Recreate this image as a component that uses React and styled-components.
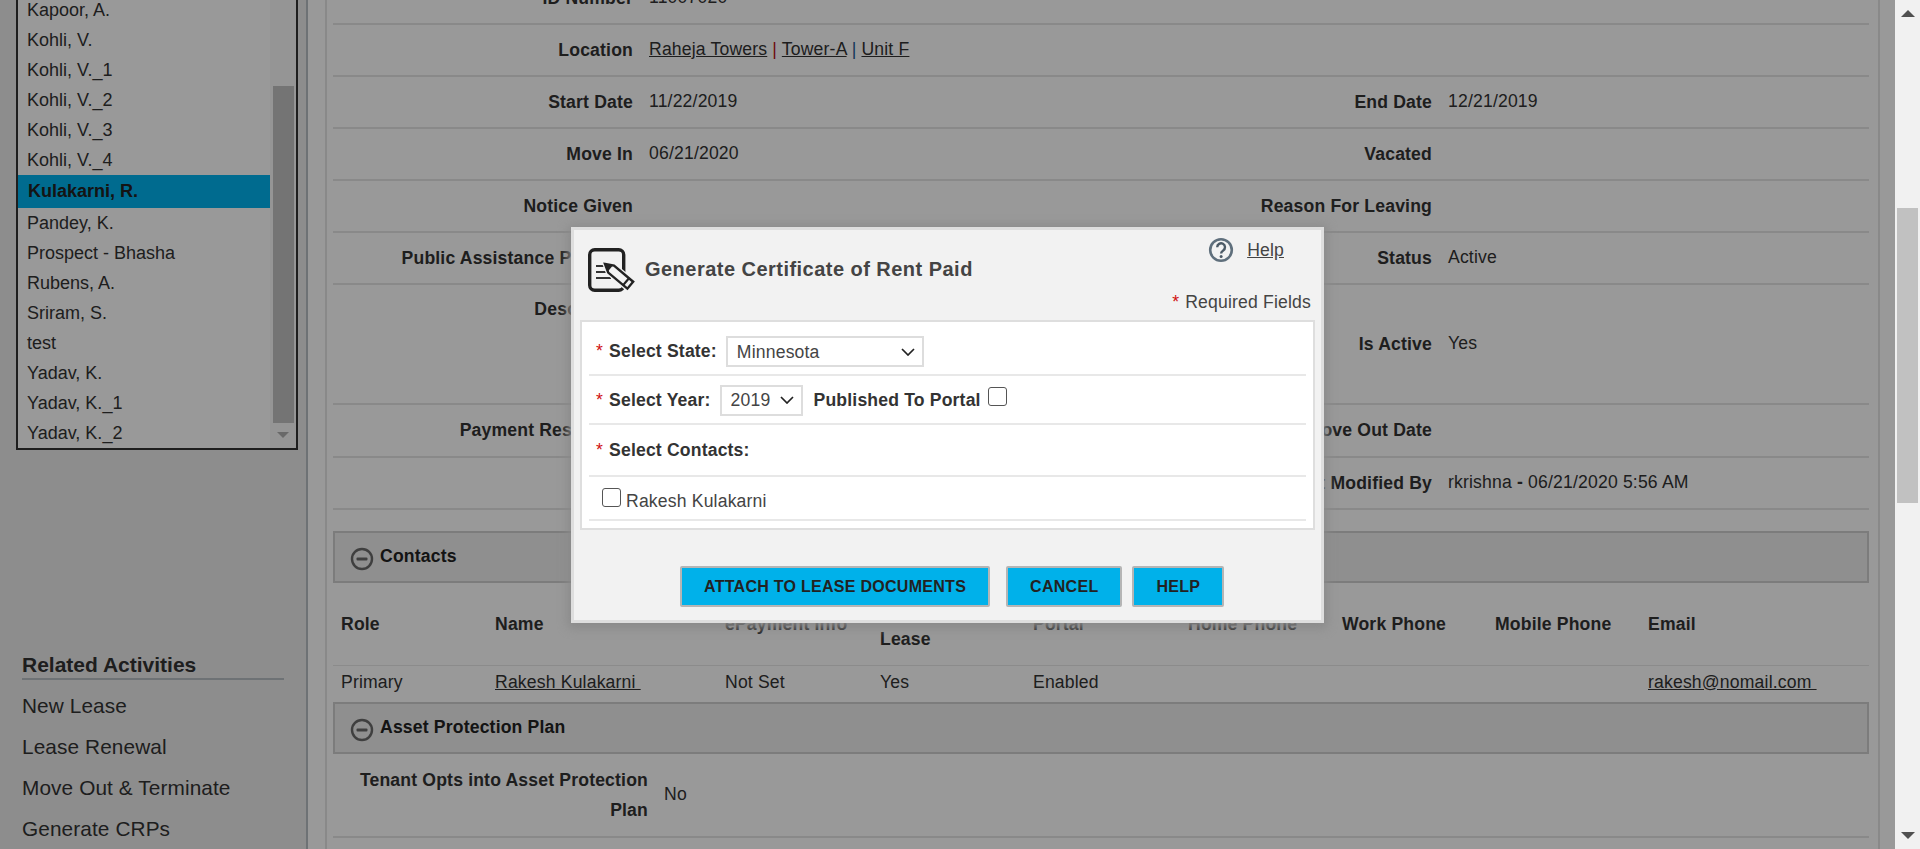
import React from "react";
import styled, { createGlobalStyle } from "styled-components";

const chevron =
  "data:image/svg+xml,%3Csvg xmlns='http://www.w3.org/2000/svg' width='14' height='8' viewBox='0 0 14 8'%3E%3Cpath d='M1 1l6 6 6-6' fill='none' stroke='%23222' stroke-width='1.7'/%3E%3C/svg%3E";

const tenants = [
  "Kapoor, A.",
  "Kohli, V.",
  "Kohli, V._1",
  "Kohli, V._2",
  "Kohli, V._3",
  "Kohli, V._4",
  "Kulakarni, R.",
  "Pandey, K.",
  "Prospect - Bhasha",
  "Rubens, A.",
  "Sriram, S.",
  "test",
  "Yadav, K.",
  "Yadav, K._1",
  "Yadav, K._2",
];

const activities = [
  "New Lease",
  "Lease Renewal",
  "Move Out & Terminate",
  "Generate CRPs",
];

const columns = [
  "Role",
  "Name",
  "ePayment Info",
  "On Lease",
  "Portal",
  "Home Phone",
  "Work Phone",
  "Mobile Phone",
  "Email",
];

const App = () => {
  const rows = [
    { label: "ID Number", value: "11007020" },
    {
      label: "Location",
      value: (
        <>
          <LinkText>Raheja Towers</LinkText> <RedPipe>|</RedPipe>{" "}
          <LinkText>Tower-A</LinkText> <BluePipe>|</BluePipe>{" "}
          <LinkText>Unit F</LinkText>
        </>
      ),
    },
    {
      label: "Start Date",
      value: "11/22/2019",
      rightLabel: "End Date",
      rightValue: "12/21/2019",
    },
    { label: "Move In", value: "06/21/2020", rightLabel: "Vacated" },
    { label: "Notice Given", rightLabel: "Reason For Leaving" },
    {
      label: "Public Assistance Program",
      rightLabel: "Status",
      rightValue: "Active",
    },
    { label: "Description", rightLabel: "Is Active", rightValue: "Yes", tall: true },
    {
      label: "Payment Restriction",
      rightLabel: "Move Out Date",
      height: 53,
    },
    {
      rightLabel: "Last Modified By",
      rightValue: (
        <>
          rkrishna <b>-</b> 06/21/2020 5:56 AM
        </>
      ),
    },
  ];

  return (
    <Frame>
      <GlobalStyle />
      <Page>
        <Shell>
          <Sidebar>
            <ListBox>
              <TenantList>
                {tenants.map((name) =>
                  name === "Kulakarni, R." ? (
                    <SelectedTenant key={name}>{name}</SelectedTenant>
                  ) : (
                    <Tenant key={name}>{name}</Tenant>
                  )
                )}
              </TenantList>
              <ListScroll>
                <ListThumb />
                <ListArrow />
              </ListScroll>
            </ListBox>
            <RelatedTitle>Related Activities</RelatedTitle>
            {activities.map((item) => (
              <Activity key={item}>{item}</Activity>
            ))}
          </Sidebar>
          <Main>
            {rows.map((row) => (
              <DetailRow
                key={row.rightLabel || row.label}
                $height={row.tall ? 120 : row.height || 52}
              >
                <DetailLabel $top={row.tall}>{row.label}</DetailLabel>
                <DetailValue>{row.value}</DetailValue>
                <DetailLabel>{row.rightLabel}</DetailLabel>
                <DetailValue>{row.rightValue}</DetailValue>
              </DetailRow>
            ))}
            <SectionBar $first>
              <MinusIcon />
              Contacts
            </SectionBar>
            <TableHead>
              {columns.map((col) => (
                <HeadCell key={col}>
                  {col === "On Lease" ? (
                    <>
                      On
                      <br />
                      Lease
                    </>
                  ) : (
                    col
                  )}
                </HeadCell>
              ))}
            </TableHead>
            <TableRow>
              <BodyCell>Primary</BodyCell>
              <BodyCell>
                <LinkText>Rakesh Kulakarni&nbsp;</LinkText>
              </BodyCell>
              <BodyCell>Not Set</BodyCell>
              <BodyCell>Yes</BodyCell>
              <BodyCell>Enabled</BodyCell>
              <BodyCell />
              <BodyCell />
              <BodyCell />
              <BodyCell>
                <LinkText>rakesh@nomail.com&nbsp;</LinkText>
              </BodyCell>
            </TableRow>
            <SectionBar>
              <MinusIcon />
              Asset Protection Plan
            </SectionBar>
            <PlanRow>
              <PlanLabel>Tenant Opts into Asset Protection Plan</PlanLabel>
              <DetailValue>No</DetailValue>
            </PlanRow>
          </Main>
        </Shell>
        <Overlay />
        <Modal>
          <ModalHeader>
            <DocIcon />
            <ModalTitle>Generate Certificate of Rent Paid</ModalTitle>
            <HelpLink>
              <HelpIcon />
              <LinkText>Help</LinkText>
            </HelpLink>
          </ModalHeader>
          <RequiredNote>
            <NoteStar>*</NoteStar> Required Fields
          </RequiredNote>
          <Panel>
            <FormRow $height={54} $pad={7}>
              <FieldLabel>
                <Star>*</Star>Select State:
              </FieldLabel>
              <Dropdown $width={198} defaultValue="Minnesota">
                <option>Minnesota</option>
                <option>Wisconsin</option>
              </Dropdown>
            </FormRow>
            <FormRow $height={49} $pad={1}>
              <FieldLabel>
                <Star>*</Star>Select Year:
              </FieldLabel>
              <Dropdown $width={83} defaultValue="2019">
                <option>2019</option>
                <option>2020</option>
              </Dropdown>
              <PublishLabel>Published To Portal</PublishLabel>
              <Check $raise />
            </FormRow>
            <FormRow $height={52}>
              <FieldLabel>
                <Star>*</Star>Select Contacts:
              </FieldLabel>
            </FormRow>
            <FormRow $height={44} $pad={6}>
              <ContactLabel>
                <Check />
                Rakesh Kulakarni
              </ContactLabel>
            </FormRow>
          </Panel>
          <ButtonRow>
            <ActionButton>Attach to Lease Documents</ActionButton>
            <ActionButton $gap={16}>Cancel</ActionButton>
            <ActionButton $gap={10}>Help</ActionButton>
          </ButtonRow>
        </Modal>
      </Page>
      <PageScroll>
        <ScrollUp />
        <PageThumb />
        <ScrollDown />
      </PageScroll>
    </Frame>
  );
};

export default App;

const MinusIcon = () => (
  <MinusSvg viewBox="0 0 24 24">
    <circle cx="12" cy="12" r="10" fill="none" stroke="#6a6a6a" strokeWidth="2.4" />
    <rect x="6.5" y="10.5" width="11" height="3" rx="1" fill="#6a6a6a" />
  </MinusSvg>
);

const HelpIcon = () => (
  <HelpSvg viewBox="0 0 26 26">
    <circle cx="13" cy="13" r="10.8" fill="none" stroke="#5f6f7c" strokeWidth="2.6" />
    <path
      d="M9.2 10.2a3.9 3.9 0 1 1 6 3.3c-1.4.9-2.1 1.6-2.1 3.1"
      fill="none"
      stroke="#4c5a66"
      strokeWidth="2.4"
    />
    <circle cx="13.1" cy="19.4" r="1.5" fill="#4c5a66" />
  </HelpSvg>
);

const DocIcon = () => (
  <DocSvg viewBox="0 0 48 46">
    <rect x="2.7" y="2.7" width="34" height="40.6" rx="5" fill="none" stroke="#222" strokeWidth="3.4" />
    <path d="M9 19h18M9 25h15M9 31h15" stroke="#333" strokeWidth="2.2" />
    <g transform="translate(18 17) rotate(40)">
      <path d="M0 0l8 -4.5h25v9h-25z" fill="#f2f2f2" stroke="#f2f2f2" strokeWidth="5" />
      <path d="M0 0l8 -4.5h25v9h-25z" fill="#f2f2f2" stroke="#222" strokeWidth="2.4" />
      <path d="M0 0l7 -3.5v7z" fill="#222" />
      <path d="M27.5 -4.5v9" stroke="#222" strokeWidth="2.2" />
    </g>
  </DocSvg>
);

const GlobalStyle = createGlobalStyle`
  html, body {
    margin: 0;
    height: 100%;
    overflow: hidden;
    background: #fff;
  }
  * {
    box-sizing: border-box;
  }
  body {
    font-family: "Liberation Sans", Arial, sans-serif;
    font-size: 17.6px;
    letter-spacing: 0.17px;
    color: #333;
  }
`;

const Frame = styled.div`
  display: flex;
  height: 100vh;
  overflow: hidden;
`;

const Page = styled.div`
  position: relative;
  flex: 1;
  overflow: hidden;
`;

const Shell = styled.div`
  display: flex;
  min-height: calc(100vh + 27px);
  margin-top: -27px;
`;

const Sidebar = styled.aside`
  width: 308px;
  flex: none;
  background: #ececec;
  border-right: 2px solid #b8bfc4;
`;

const ListBox = styled.div`
  display: flex;
  width: 282px;
  margin-left: 16px;
  border: 2px solid #333;
  border-top: 0;
  background: #fff;
`;

const TenantList = styled.ul`
  width: 252px;
  margin: 0;
  padding: 22px 0 0;
  list-style: none;
  font-size: 18px;
  letter-spacing: 0;
`;

const Tenant = styled.li`
  height: 30px;
  padding-left: 9px;
  line-height: 30px;
`;

const SelectedTenant = styled.li`
  height: 33px;
  padding-left: 10px;
  line-height: 33px;
  font-weight: bold;
  background: #00b2ee;
  color: #222;
`;

const ListScroll = styled.div`
  display: flex;
  flex-direction: column;
  align-items: center;
  width: 26px;
  padding-top: 113px;
  background: #f8f8f8;
`;

const ListThumb = styled.div`
  width: 21px;
  height: 337px;
  background: #c1c1c1;
`;

const ListArrow = styled.div`
  margin-top: 9px;
  border-left: 6px solid transparent;
  border-right: 6px solid transparent;
  border-top: 6px solid #b0b0b0;
`;

const RelatedTitle = styled.h3`
  width: 262px;
  margin: 202px 0 5px 22px;
  border-bottom: 2px solid #b8bfc4;
  font-size: 21px;
  line-height: 26px;
  letter-spacing: 0;
  color: #333;
`;

const Activity = styled.div`
  margin-left: 22px;
  font-size: 20.8px;
  line-height: 41px;
  letter-spacing: 0.1px;
`;

const Main = styled.main`
  width: 1555px;
  flex: none;
  margin-left: 17px;
  padding: 0 9px 0 6px;
  border-left: 2px solid #e4e4e4;
  border-right: 2px solid #e4e4e4;
`;

const DetailRow = styled.div`
  display: grid;
  grid-template-columns: 300px 500px 299px 1fr;
  align-items: center;
  height: ${(p) => p.$height}px;
  border-bottom: 2px solid #e4e4e4;
`;

const DetailLabel = styled.div`
  align-self: ${(p) => (p.$top ? "start" : "center")};
  margin-top: ${(p) => (p.$top ? "14px" : "0")};
  text-align: right;
  font-weight: bold;
`;

const DetailValue = styled.div`
  padding: 0 0 2px 16px;
`;

const LinkText = styled.span`
  text-decoration: underline;
`;

const RedPipe = styled.span`
  color: #b81515;
`;

const BluePipe = styled.span`
  color: #1d5a94;
`;

const SectionBar = styled.div`
  display: flex;
  align-items: center;
  height: 52px;
  margin-top: ${(p) => (p.$first ? "21px" : "0")};
  padding: 0 0 2px 15px;
  background: #eee;
  border: 2px solid #cfcfcf;
  font-weight: bold;
  color: #222;
`;

const MinusSvg = styled.svg`
  width: 24px;
  height: 24px;
  margin: 5px 6px 0 0;
`;

const TableHead = styled.div`
  display: grid;
  grid-template-columns: 154px 230px 155px 153px 155px 154px 153px 153px 1fr;
  align-items: center;
  height: 83px;
  border-bottom: 1px solid #e8e8e8;
  line-height: 30px;
`;

const HeadCell = styled.div`
  padding-left: 8px;
  font-weight: bold;
`;

const TableRow = styled(TableHead)`
  height: 36px;
  border-bottom: 0;
`;

const BodyCell = styled.div`
  padding: 0 0 5px 8px;
`;

const PlanRow = styled.div`
  display: flex;
  align-items: center;
  height: 84px;
  border-bottom: 2px solid #e4e4e4;
`;

const PlanLabel = styled.div`
  width: 315px;
  padding-left: 20px;
  text-align: right;
  font-weight: bold;
  line-height: 30px;
`;

const Overlay = styled.div`
  position: absolute;
  inset: 0;
  background: rgba(0, 0, 0, 0.4);
`;

const Modal = styled.div`
  position: absolute;
  top: 227px;
  left: 571px;
  width: 753px;
  height: 396px;
  background: #f2f2f2;
  border: 3px solid #dedede;
  box-shadow: 0 2px 10px 3px #8a8a8a;
  color: #444;
`;

const ModalHeader = styled.div`
  display: flex;
  align-items: flex-start;
  height: 63px;
  padding: 7px 37px 0 13px;
`;

const DocSvg = styled.svg`
  flex: none;
  width: 48px;
  height: 46px;
  margin-top: 10px;
`;

const ModalTitle = styled.h2`
  margin: 20px 0 0 10px;
  font-size: 20px;
  line-height: 24px;
  letter-spacing: 0.47px;
  color: #444;
`;

const HelpLink = styled.div`
  display: flex;
  align-items: center;
  gap: 13px;
  margin-left: auto;
`;

const HelpSvg = styled.svg`
  width: 26px;
  height: 26px;
`;

const RequiredNote = styled.div`
  height: 27px;
  margin-top: -1px;
  padding-right: 10px;
  line-height: 20px;
  text-align: right;
`;

const Star = styled.span`
  margin-right: 6px;
  font-weight: normal;
  color: #d01010;
`;

const NoteStar = styled(Star)`
  margin-right: 1px;
`;

const Panel = styled.div`
  height: 210px;
  margin: 1px 6px 0;
  padding: 0 7px;
  background: #fff;
  border: 2px solid #dedede;
`;

const FormRow = styled.div`
  display: flex;
  align-items: center;
  height: ${(p) => p.$height}px;
  padding: ${(p) => p.$pad || 0}px 0 0 7px;
  border-bottom: 2px solid #e8e8e8;
`;

const FieldLabel = styled.label`
  margin-right: 9px;
  font-weight: bold;
  color: #333;
`;

const Dropdown = styled.select`
  appearance: none;
  width: ${(p) => p.$width}px;
  height: 31px;
  padding-left: 9px;
  background: #fff url("${chevron}") no-repeat right 7px center;
  border: 2px solid #ddd;
  border-radius: 0;
  font-family: inherit;
  font-size: 17.6px;
  letter-spacing: 0.17px;
  color: #444;
`;

const PublishLabel = styled.span`
  margin: 0 7px 0 11px;
  font-weight: bold;
  color: #333;
`;

const Check = styled.input.attrs({ type: "checkbox" })`
  appearance: none;
  width: 19px;
  height: 19px;
  margin: ${(p) => (p.$raise ? "-8px 0 0 0" : "-7px 5px 0 6px")};
  background: #fff;
  border: 1px solid #555;
  border-radius: 3px;
`;

const ContactLabel = styled.label`
  display: flex;
  align-items: center;
  color: #444;
`;

const ButtonRow = styled.div`
  display: flex;
  margin-top: 36px;
  padding-left: 106px;
`;

const ActionButton = styled.button`
  height: 41px;
  margin-left: ${(p) => p.$gap || 0}px;
  padding: 0 22px;
  background: #00b1ea;
  border: 2px solid #b5b5b5;
  border-radius: 2px;
  font-family: inherit;
  font-size: 16px;
  font-weight: bold;
  letter-spacing: 0.28px;
  text-transform: uppercase;
  color: #222;
`;

const PageScroll = styled.div`
  display: flex;
  flex-direction: column;
  align-items: center;
  flex: none;
  width: 25px;
  height: 100%;
  padding-top: 10px;
  background: #f1f1f1;
`;

const ScrollUp = styled.div`
  border-left: 7px solid transparent;
  border-right: 7px solid transparent;
  border-bottom: 7px solid #505050;
`;

const PageThumb = styled.div`
  width: 21px;
  height: 295px;
  margin-top: 191px;
  background: #c1c1c1;
`;

const ScrollDown = styled.div`
  margin-top: auto;
  margin-bottom: 10px;
  border-left: 7px solid transparent;
  border-right: 7px solid transparent;
  border-top: 7px solid #505050;
`;
